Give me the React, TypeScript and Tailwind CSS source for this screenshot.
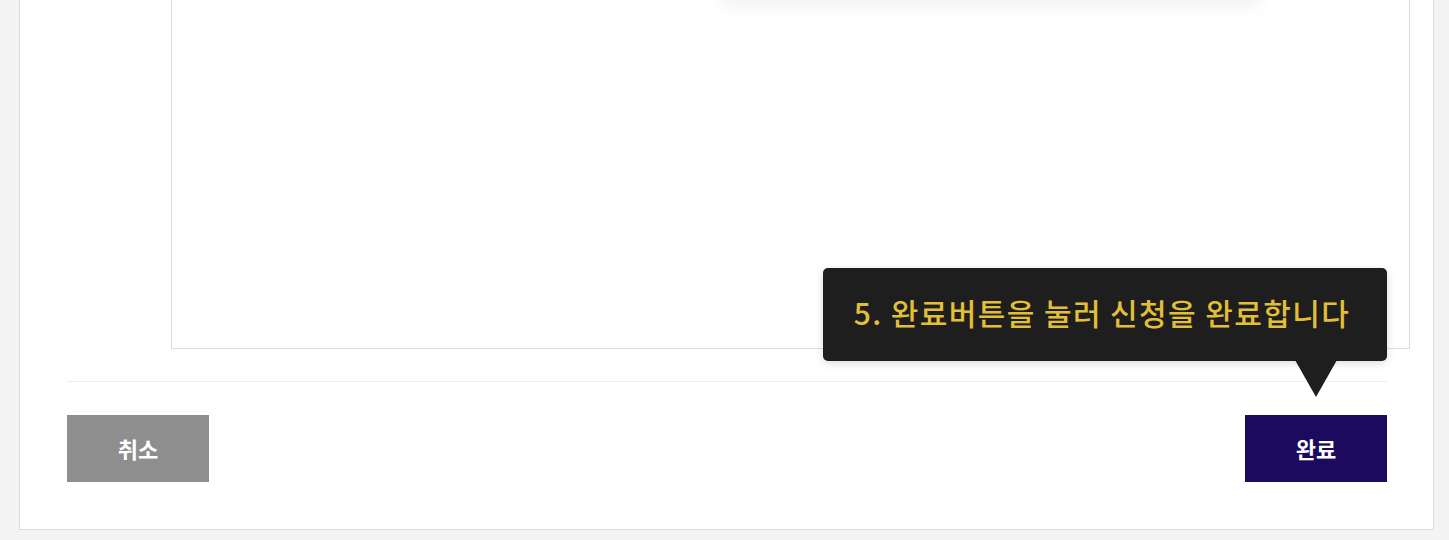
import React from 'react';

const font = { fontFamily: '"Noto Sans CJK KR", "Noto Sans", sans-serif' };

export default function App() {
  return (
    <div className="min-h-[540px] bg-[#f4f4f4] pl-[19px] pr-[15px] pb-[10px]" style={font}>
      <div className="relative bg-white border-x border-b border-[#dcdcdc]">
        {/* faint shadow of a guide bubble above the view */}
        <div className="absolute left-[700px] top-[-30px] h-[30px] w-[540px] rounded-md bg-[#f6f6f6] shadow-[0_6px_18px_rgba(0,0,0,0.06)]" />

        <div className="pl-[151px] pr-[23px]">
          <div className="h-[349px] border-x border-b border-[#dcdcdc] bg-white" />
        </div>

        <div className="pl-[47px] pr-[46px] pb-[47px]">
          <div className="mt-[32px] border-t border-[#ececec]" />
          <div className="mt-[33px] flex items-center justify-between">
            <button className="h-[67px] w-[142px] bg-[#8e8e8e] text-[22px] font-bold text-white">
              취소
            </button>
            <div className="relative">
              <div className="absolute bottom-[121px] right-0 flex h-[93px] w-[564px] items-center justify-center rounded-[5px] bg-[#1e1e1e] pb-[4px] pr-[6px] shadow-[0_2px_8px_rgba(0,0,0,0.15)]">
                <span className="text-[30px] font-medium tracking-[1.4px] text-[#e2bf36]">
                  5. 완료버튼을 눌러 신청을 완료합니다
                </span>
              </div>
              <svg
                className="absolute bottom-[85px] left-1/2 -translate-x-1/2"
                width="42"
                height="37"
                viewBox="0 0 42 37"
              >
                <polygon points="0,0 42,0 21,37" fill="#1e1e1e" />
              </svg>
              <button className="h-[67px] w-[142px] bg-[#1b0a5e] text-[22px] font-bold text-white">
                완료
              </button>
            </div>
          </div>
        </div>
      </div>
    </div>
  );
}
